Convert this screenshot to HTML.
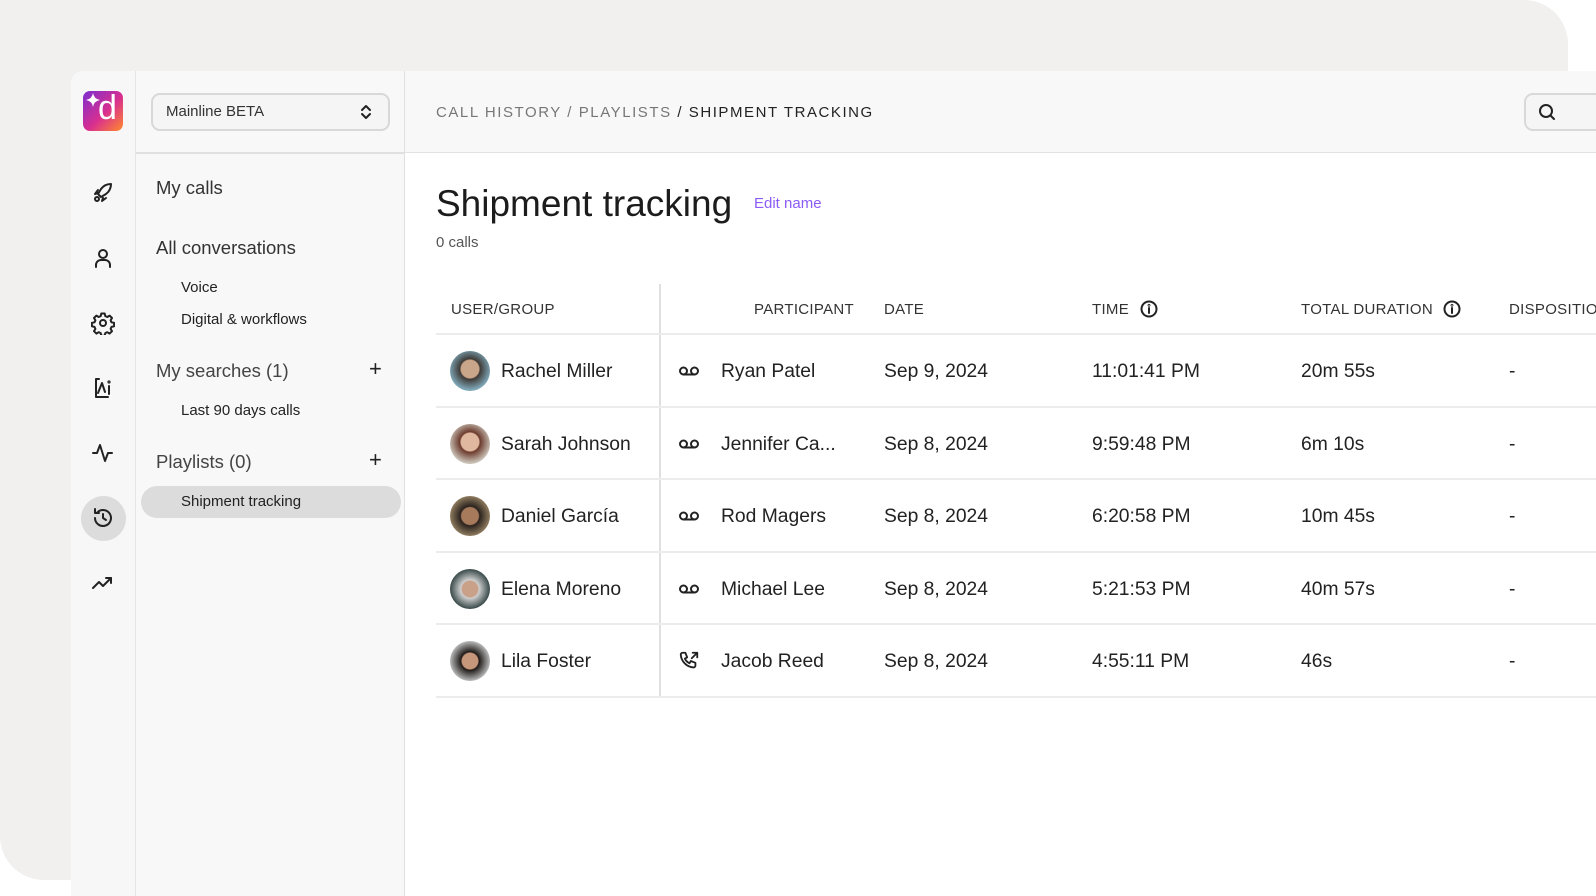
<!DOCTYPE html>
<html><head><meta charset="utf-8"><style>
*{box-sizing:border-box;margin:0;padding:0}
body{width:1596px;height:896px;overflow:hidden;background:#fff;font-family:"Liberation Sans",sans-serif;color:#222;position:relative}
.frame{position:absolute;left:0;top:0;width:1568px;height:880px;background:#f1f0ef;border-radius:0 44px 0 44px}
.app{position:absolute;left:71px;top:71px;right:0;bottom:0;background:#fff;border-top-left-radius:12px;overflow:hidden}
.rail{position:absolute;left:0;top:0;width:65px;bottom:0;background:#f7f7f7;border-right:1px solid #e4e4e4}
.nav{position:absolute;left:65px;top:0;width:269px;bottom:0;background:#f8f8f8;border-right:1px solid #e0e0e0}
.main{position:absolute;left:334px;top:0;right:0;bottom:0;background:#fff}
.hdr{position:absolute;left:0;right:0;top:0;height:82px;background:#f8f8f8;border-bottom:1.5px solid #e2e2e2}
.abs{position:absolute;white-space:nowrap}
svg{position:absolute}
.ic{stroke:#222;fill:none;stroke-width:2;stroke-linecap:round;stroke-linejoin:round}
.th{font-size:15px;color:#333;letter-spacing:.3px}
.td{font-size:19.3px;color:#222}
.line{position:absolute;left:365px;right:0;height:2px;background:#ececec}
.av{position:absolute;left:379px;width:40px;height:40px;border-radius:50%}
</style></head><body>
<div class="frame"></div>
<div class="app">
 <div class="rail">
  <div class="abs" style="left:12px;top:20px;width:40px;height:40px;border-radius:7px;background:linear-gradient(135deg,#7b2fd0 0%,#d92f8f 55%,#ff8a2a 100%)"></div>
  <div class="abs" style="left:27px;top:18px;color:#fff;font-size:34px;font-weight:400">d</div>
  <svg style="left:15px;top:22px" width="14" height="14" viewBox="0 0 14 14"><path d="M7 0 Q8 6 14 7 Q8 8 7 14 Q6 8 0 7 Q6 6 7 0Z" fill="#fff"/></svg>
  <svg style="left:20px;top:110px" width="24" height="24" viewBox="0 0 24 24" class="ic"><circle cx="6" cy="18" r="2"/><path d="M9 15l-2-2 3-5c3-4 7-5 10-5 0 3-1 7-5 10l-5 3z"/><path d="M12 17l-1 3 4-3M7 12l-3 1 3-4"/></svg>
  <svg style="left:20px;top:175px" width="24" height="24" viewBox="0 0 24 24" class="ic"><circle cx="12" cy="8" r="4"/><path d="M5 21v-2a5 5 0 0 1 5-5h4a5 5 0 0 1 5 5v2"/></svg>
  <svg style="left:20px;top:240px" width="24" height="24" viewBox="0 0 24 24" class="ic"><circle cx="12" cy="12" r="3"/><path d="M10.3 2.5h3.4l.6 2.6 2 .9 2.3-1.4 2.4 2.4-1.4 2.3.9 2 2.6.6v3.4l-2.6.6-.9 2 1.4 2.3-2.4 2.4-2.3-1.4-2 .9-.6 2.6h-3.4l-.6-2.6-2-.9-2.3 1.4-2.4-2.4 1.4-2.3-.9-2-2.6-.6v-3.4l2.6-.6.9-2-1.4-2.3 2.4-2.4 2.3 1.4 2-.9z"/></svg>
  <svg style="left:20px;top:305px" width="24" height="24" viewBox="0 0 24 24" class="ic"><path d="M8 3H5v18h12"/><path d="M7 17l4-10 3 9"/><path d="M18 10v8"/><circle cx="18" cy="6" r=".6"/></svg>
  <svg style="left:20px;top:370px" width="24" height="24" viewBox="0 0 24 24" class="ic"><path d="M2 12h4l3-8 5 16 3-8h4"/></svg>
  <div class="abs" style="left:10px;top:425px;width:45px;height:45px;border-radius:50%;background:#dcdcdc"></div>
  <svg style="left:20px;top:435px" width="24" height="24" viewBox="0 0 24 24" class="ic"><path d="M4 12a8 8 0 1 0 2.5-5.8"/><path d="M4 3v4h4"/><path d="M12 8v4l3 2"/></svg>
  <svg style="left:20px;top:500px" width="24" height="24" viewBox="0 0 24 24" class="ic"><path d="M2 17l6-6 4 4 8-8"/><path d="M15 7h5v5"/></svg>
 </div>
 <div class="nav">
  <div class="abs" style="left:15px;top:22px;width:239px;height:38px;border:2px solid #d8d8d8;border-radius:9px;background:#f5f5f5"></div>
  <div class="abs" style="left:30px;top:32px;font-size:15px;color:#333">Mainline BETA</div>
  <svg style="left:223px;top:32px" width="14" height="18" viewBox="0 0 14 18" class="ic" stroke-width="1.6"><path d="M3 7l4-4 4 4M3 11l4 4 4-4"/></svg>
  <div class="abs" style="left:0;right:0;top:81px;height:1.5px;background:#e0e0e0"></div>
  <div class="abs" style="left:20px;top:106px;font-size:18.5px;color:#333">My calls</div>
  <div class="abs" style="left:20px;top:166px;font-size:18.5px;color:#333">All conversations</div>
  <div class="abs" style="left:45px;top:208px;font-size:15px;color:#222">Voice</div>
  <div class="abs" style="left:45px;top:240px;font-size:15px;color:#222">Digital &amp; workflows</div>
  <div class="abs" style="left:20px;top:289px;font-size:18.5px;color:#444">My searches (1)</div>
  <div class="abs" style="left:233px;top:285px;font-size:22px;color:#222">+</div>
  <div class="abs" style="left:45px;top:331px;font-size:15px;color:#222">Last 90 days calls</div>
  <div class="abs" style="left:20px;top:380px;font-size:18.5px;color:#444">Playlists (0)</div>
  <div class="abs" style="left:233px;top:376px;font-size:22px;color:#222">+</div>
  <div class="abs" style="left:5px;top:415px;width:260px;height:32px;border-radius:16px;background:#dcdcdc"></div>
  <div class="abs" style="left:45px;top:422px;font-size:15px;color:#222">Shipment tracking</div>
 </div>
 <div class="main">
  <div class="hdr"></div>
  <div class="abs" style="left:31px;top:33px;font-size:15px;letter-spacing:1.55px;color:#777">CALL HISTORY / PLAYLISTS <span style="color:#222">/ SHIPMENT TRACKING</span></div>
  <div class="abs" style="left:1119px;top:22px;width:80px;height:38px;border:2px solid #d8d8d8;border-radius:9px;background:#f5f5f5"></div>
  <svg style="left:1133px;top:32px" width="18" height="18" viewBox="0 0 18 18" class="ic" stroke-width="1.6"><circle cx="8" cy="8" r="6"/><path d="M12.5 12.5l3.5 3.5"/></svg>
  <div class="abs" style="left:31px;top:112px;font-size:37px;color:#1c1c1c">Shipment tracking</div>
  <div class="abs" style="left:349px;top:124px;font-size:15px;color:#8b5cf6">Edit name</div>
  <div class="abs" style="left:31px;top:163px;font-size:15px;color:#555">0 calls</div>
 </div>
 <div class="abs" style="left:588px;top:213px;width:1.5px;height:413px;background:#e0e0e0"></div>
 <div class="abs th" style="left:380px;top:230px">USER/GROUP</div>
 <div class="abs th" style="left:683px;top:230px">PARTICIPANT</div>
 <div class="abs th" style="left:813px;top:230px">DATE</div>
 <div class="abs th" style="left:1021px;top:230px">TIME</div>
 <svg style="left:1069px;top:229px" width="18" height="18" viewBox="0 0 18 18" class="ic" stroke-width="1.6"><circle cx="9" cy="9" r="7.5"/><path d="M9 8v5"/><circle cx="9" cy="5.3" r=".4"/></svg>
 <div class="abs th" style="left:1230px;top:230px">TOTAL DURATION</div>
 <svg style="left:1372px;top:229px" width="18" height="18" viewBox="0 0 18 18" class="ic" stroke-width="1.6"><circle cx="9" cy="9" r="7.5"/><path d="M9 8v5"/><circle cx="9" cy="5.3" r=".4"/></svg>
 <div class="abs th" style="left:1438px;top:230px">DISPOSITION</div>
 <div class="line" style="top:262px"></div>
 <div class="line" style="top:335px"></div>
 <div class="line" style="top:407px"></div>
 <div class="line" style="top:480px"></div>
 <div class="line" style="top:552px"></div>
 <div class="line" style="top:625px"></div>

 <div class="av" style="top:280px;background:radial-gradient(circle at 50% 45%,#c9a58a 0 30%,#3e3a36 34%,#7fa7b8 70%)"></div>
 <div class="av" style="top:353px;background:radial-gradient(circle at 50% 45%,#e0b8a0 0 30%,#6b3a2c 34%,#c9c0b5 70%)"></div>
 <div class="av" style="top:425px;background:radial-gradient(circle at 50% 50%,#a77a5c 0 30%,#2a221d 34%,#8d7a5e 70%)"></div>
 <div class="av" style="top:498px;background:radial-gradient(circle at 50% 50%,#c9a088 0 28%,#cfcfcf 32%,#3a4a4a 70%)"></div>
 <div class="av" style="top:570px;background:radial-gradient(circle at 50% 50%,#c6977a 0 28%,#1f1a18 32%,#b7b8b8 70%)"></div>

 <div class="abs td" style="left:430px;top:290px">Rachel Miller</div>
 <div class="abs td" style="left:430px;top:363px">Sarah Johnson</div>
 <div class="abs td" style="left:430px;top:435px">Daniel García</div>
 <div class="abs td" style="left:430px;top:508px">Elena Moreno</div>
 <div class="abs td" style="left:430px;top:580px">Lila Foster</div>

 <svg style="left:607px;top:292px" width="22" height="16" viewBox="0 0 22 16" class="ic" stroke-width="1.8"><circle cx="5.5" cy="8" r="3.5"/><circle cx="16.5" cy="8" r="3.5"/><path d="M5.5 11.5h11"/></svg>
 <svg style="left:607px;top:365px" width="22" height="16" viewBox="0 0 22 16" class="ic" stroke-width="1.8"><circle cx="5.5" cy="8" r="3.5"/><circle cx="16.5" cy="8" r="3.5"/><path d="M5.5 11.5h11"/></svg>
 <svg style="left:607px;top:437px" width="22" height="16" viewBox="0 0 22 16" class="ic" stroke-width="1.8"><circle cx="5.5" cy="8" r="3.5"/><circle cx="16.5" cy="8" r="3.5"/><path d="M5.5 11.5h11"/></svg>
 <svg style="left:607px;top:510px" width="22" height="16" viewBox="0 0 22 16" class="ic" stroke-width="1.8"><circle cx="5.5" cy="8" r="3.5"/><circle cx="16.5" cy="8" r="3.5"/><path d="M5.5 11.5h11"/></svg>
 <svg style="left:607px;top:579px" width="22" height="22" viewBox="0 0 24 24" class="ic" stroke-width="1.8"><path d="M5 3h3l2 5-2.5 1.5a11 11 0 0 0 5 5L14 12l5 2v3a2 2 0 0 1-2 2A15 15 0 0 1 3 5a2 2 0 0 1 2-2"/><path d="M15 9l6-6M16 3h5v5"/></svg>

 <div class="abs td" style="left:650px;top:290px">Ryan Patel</div>
 <div class="abs td" style="left:650px;top:363px">Jennifer Ca...</div>
 <div class="abs td" style="left:650px;top:435px">Rod Magers</div>
 <div class="abs td" style="left:650px;top:508px">Michael Lee</div>
 <div class="abs td" style="left:650px;top:580px">Jacob Reed</div>

 <div class="abs td" style="left:813px;top:290px">Sep 9, 2024</div>
 <div class="abs td" style="left:813px;top:363px">Sep 8, 2024</div>
 <div class="abs td" style="left:813px;top:435px">Sep 8, 2024</div>
 <div class="abs td" style="left:813px;top:508px">Sep 8, 2024</div>
 <div class="abs td" style="left:813px;top:580px">Sep 8, 2024</div>

 <div class="abs td" style="left:1021px;top:290px">11:01:41 PM</div>
 <div class="abs td" style="left:1021px;top:363px">9:59:48 PM</div>
 <div class="abs td" style="left:1021px;top:435px">6:20:58 PM</div>
 <div class="abs td" style="left:1021px;top:508px">5:21:53 PM</div>
 <div class="abs td" style="left:1021px;top:580px">4:55:11 PM</div>

 <div class="abs td" style="left:1230px;top:290px">20m 55s</div>
 <div class="abs td" style="left:1230px;top:363px">6m 10s</div>
 <div class="abs td" style="left:1230px;top:435px">10m 45s</div>
 <div class="abs td" style="left:1230px;top:508px">40m 57s</div>
 <div class="abs td" style="left:1230px;top:580px">46s</div>

 <div class="abs td" style="left:1438px;top:290px">-</div>
 <div class="abs td" style="left:1438px;top:363px">-</div>
 <div class="abs td" style="left:1438px;top:435px">-</div>
 <div class="abs td" style="left:1438px;top:508px">-</div>
 <div class="abs td" style="left:1438px;top:580px">-</div>
</div>
</body></html>
